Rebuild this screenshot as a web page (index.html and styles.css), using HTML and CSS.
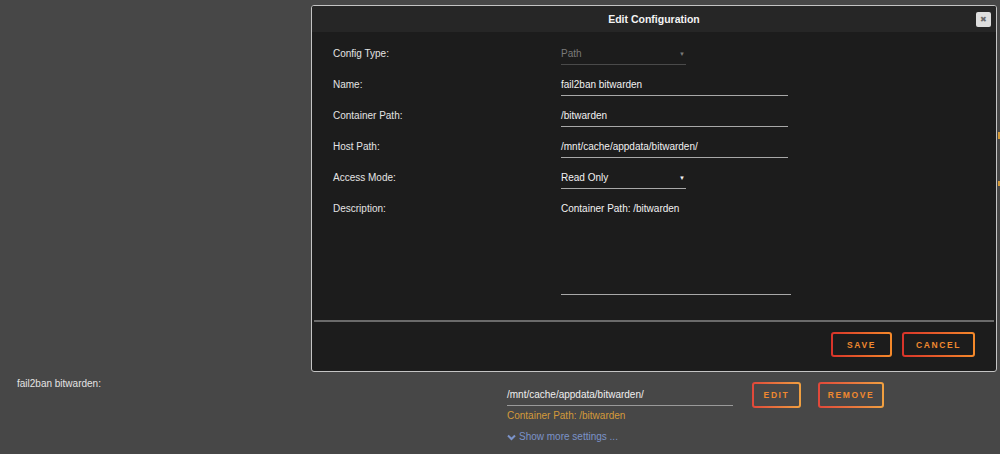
FILE: index.html
```html
<!DOCTYPE html>
<html lang="en">
  <head>
    <meta charset="UTF-8" />
    <meta name="viewport" content="width=device-width, initial-scale=1.0" />
    <title>Edit Configuration</title>
    <link rel="stylesheet" href="styles.css">
  </head>
  <body>
    <div class="page">
      <div class="setting">
        <div class="setting-label">fail2ban bitwarden:</div>
        <div class="setting-value">
          <div class="value-row">
            <div class="value-input">/mnt/cache/appdata/bitwarden/</div>
            <button class="btn">EDIT</button>
            <button class="btn">REMOVE</button>
          </div>
          <div class="value-desc">Container Path: /bitwarden</div>
          <div class="more">
            <svg width="9" height="7" viewBox="0 0 9 7"><path d="M1 1.5 L4.5 5 L8 1.5" fill="none" stroke="#7b93c9" stroke-width="2"/></svg>
            Show more settings ...
          </div>
        </div>
      </div>
    </div>

    <span class="peek peek-1"></span>
    <span class="peek peek-2"></span>

    <div class="modal">
      <div class="modal-header">
        <span class="modal-title">Edit Configuration</span>
        <button class="modal-close" aria-label="Close">&#x2716;</button>
      </div>
      <div class="modal-body">
        <div class="row">
          <label>Config Type:</label>
          <div class="field select disabled">Path<span class="arrow">&#9660;</span></div>
        </div>
        <div class="row">
          <label>Name:</label>
          <div class="field">fail2ban bitwarden</div>
        </div>
        <div class="row">
          <label>Container Path:</label>
          <div class="field">/bitwarden</div>
        </div>
        <div class="row">
          <label>Host Path:</label>
          <div class="field">/mnt/cache/appdata/bitwarden/</div>
        </div>
        <div class="row">
          <label>Access Mode:</label>
          <div class="field select">Read Only<span class="arrow">&#9660;</span></div>
        </div>
        <div class="row">
          <label>Description:</label>
          <div class="field textarea">Container Path: /bitwarden</div>
        </div>
      </div>
      <div class="modal-footer">
        <button class="btn save">SAVE</button>
        <button class="btn cancel">CANCEL</button>
      </div>
    </div>
  </body>
</html>
```

FILE: styles.css
```css
:root {
  --page-bg: #474747;
  --modal-bg: #1c1c1c;
  --header-bg: #262626;
  --text: #e4e4e4;
  --orange: #f0892f;
  --gold: #d49a3a;
  --blue: #7b93c9;
}

body {
  margin: 0;
  padding: 0;
  height: 454px;
  overflow: hidden;
  background-color: var(--page-bg);
  font-family: "Liberation Sans", Arial, sans-serif;
  font-size: 10px;
  color: var(--text);
}

.page {
  padding: 378px 0 0 17px;
}

.setting {
  display: grid;
  grid-template-columns: 490px 1fr;
}

.setting-label {
  line-height: 12px;
}

.value-row {
  display: flex;
  align-items: flex-start;
}

.value-input {
  width: 226px;
  height: 28px;
  line-height: 12px;
  padding-top: 11px;
  box-sizing: border-box;
  border-bottom: 1px solid #9a9a9a;
  color: #f0f0f0;
}

.value-row .btn {
  margin-top: 4px;
  height: 26px;
  background: linear-gradient(var(--page-bg), var(--page-bg)) padding-box,
    linear-gradient(90deg, #e0473a, #f0a040) border-box;
}

.value-row .btn:first-of-type {
  margin-left: 19px;
  width: 49px;
}

.value-row .btn + .btn {
  margin-left: 17px;
  width: 66px;
}

.value-desc {
  margin-top: 2px;
  color: var(--gold);
  line-height: 12px;
}

.more {
  margin-top: 9px;
  color: var(--blue);
  line-height: 12px;
  display: flex;
  align-items: center;
  gap: 3px;
}

.btn {
  border: 2px solid transparent;
  border-radius: 3px;
  background: linear-gradient(var(--modal-bg), var(--modal-bg)) padding-box,
    linear-gradient(90deg, #d8332a, #f58a2a) border-box;
  color: var(--orange);
  font-family: "Liberation Sans", Arial, sans-serif;
  font-size: 8.5px;
  font-weight: bold;
  letter-spacing: 1.6px;
  padding: 0;
  cursor: pointer;
}

/* bits of the page peeking out right of the dialog */
.peek {
  position: absolute;
  left: 998px;
  width: 2px;
  background-color: #d49a3a;
}

.peek-1 {
  top: 132px;
  height: 7px;
}

.peek-2 {
  top: 181px;
  height: 5px;
}

/* Dialog */
.modal {
  position: absolute;
  top: 5px;
  left: 311px;
  width: 686px;
  height: 367px;
  box-sizing: border-box;
  border: 1px solid #c4c4c4;
  border-radius: 3px;
  background-color: var(--modal-bg);
  display: flex;
  flex-direction: column;
}

.modal-header {
  height: 26px;
  background-color: var(--header-bg);
  display: flex;
  align-items: center;
  justify-content: center;
  position: relative;
  border-radius: 2px 2px 0 0;
}

.modal-title {
  font-weight: bold;
  font-size: 10.5px;
  color: #f4f4f4;
}

.modal-close {
  position: absolute;
  top: 6px;
  right: 5px;
  width: 15px;
  height: 15px;
  padding: 0;
  border: none;
  border-radius: 2px;
  background-color: #dedede;
  color: #6a6a6a;
  font-size: 8px;
  line-height: 15px;
  cursor: pointer;
}

.modal-body {
  padding: 12px 0 0 21px;
  display: flex;
  flex-direction: column;
  gap: 10px;
  flex: 1;
}

.row {
  display: grid;
  grid-template-columns: 228px 1fr;
}

.row label {
  line-height: 20px;
  color: var(--text);
}

.field {
  height: 21px;
  box-sizing: border-box;
  border-bottom: 1px solid #a8a8a8;
  line-height: 20px;
  width: 227px;
  color: #f2f2f2;
}

.select {
  width: 125px;
  position: relative;
}

.select .arrow {
  position: absolute;
  right: 1px;
  top: 0;
  font-size: 6px;
}

.disabled {
  color: #7a7a7a;
  border-bottom-color: #4a4a4a;
}

.textarea {
  width: 230px;
  height: 96px;
}

.modal-footer {
  margin: 0 2px;
  border-top: 2px solid #6a6a6a;
  padding: 10px 19px 14px 0;
  display: flex;
  justify-content: flex-end;
  gap: 10px;
}

.modal-footer .btn {
  height: 25px;
}

.save {
  width: 61px;
}

.cancel {
  width: 73px;
}
```
